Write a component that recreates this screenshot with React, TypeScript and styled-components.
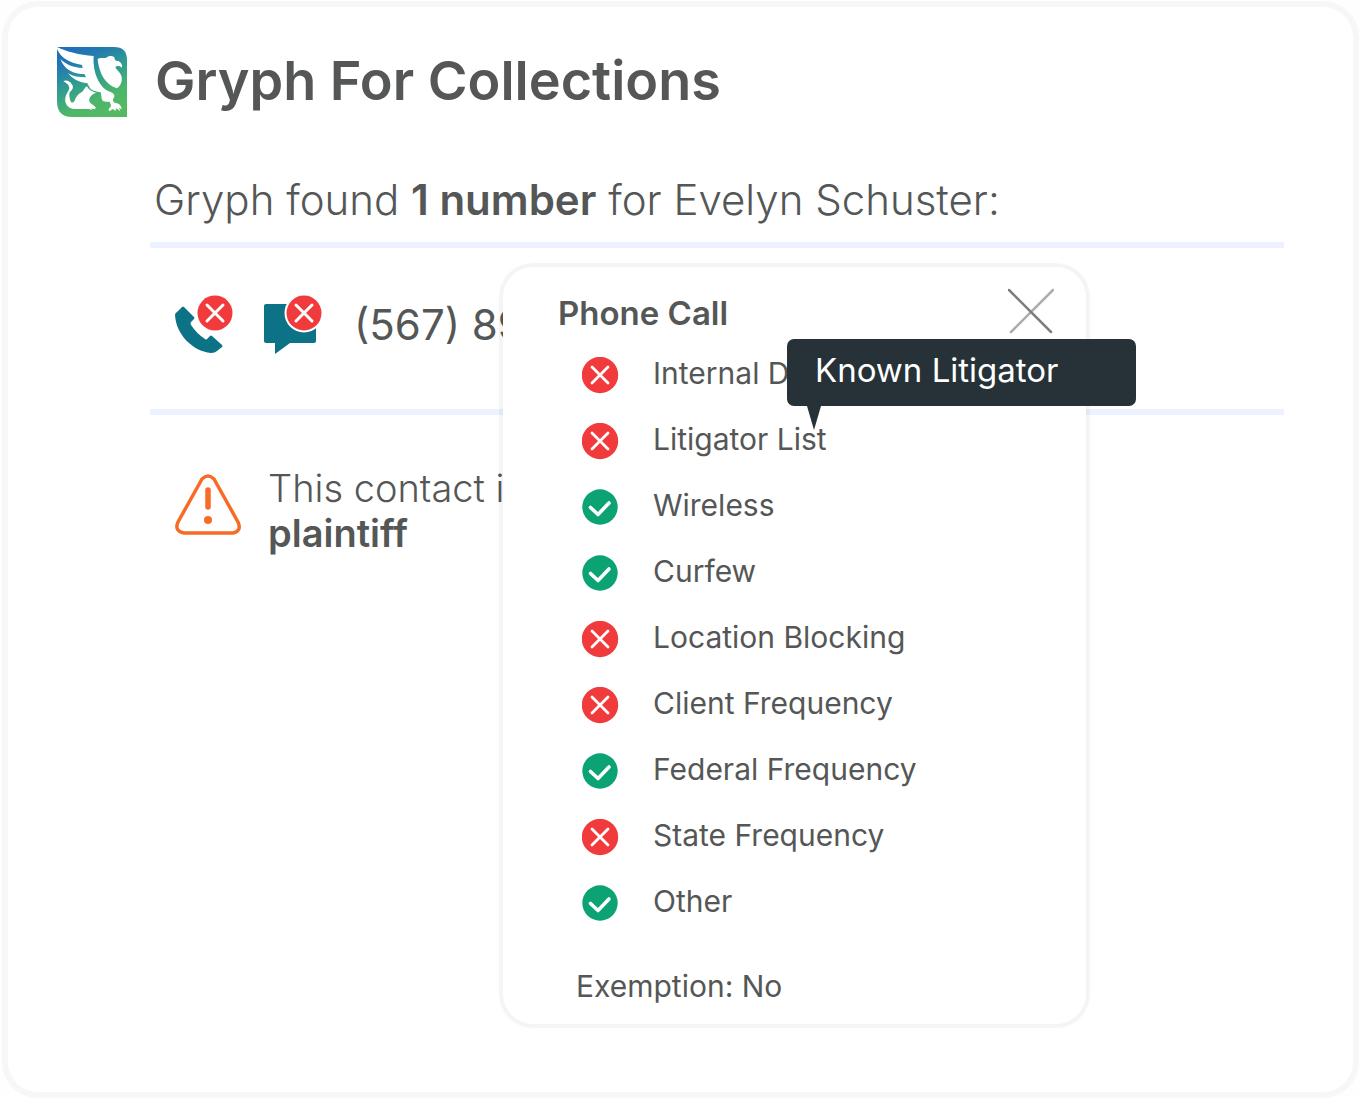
import React from "react";
import styled, { createGlobalStyle } from "styled-components";

const ink = "#555756";
const red = "#f03a3c";
const green = "#0ba373";
const teal = "#0c7285";
const rule = "#ecf2ff";

const GlobalStyle = createGlobalStyle`
  *, *::before, *::after { box-sizing: border-box; }
  body {
    margin: 0;
    background: #fefefe;
    color: ${ink};
    font-family: Inter, "Liberation Sans", sans-serif;
  }
  h1, h2, p, ul { margin: 0; padding: 0; }
  svg { display: block; flex: none; }
`;

const Page = styled.div`
  display: flex;
  min-height: 100vh;
  padding: 7px 8px 6px;
`;

const Card = styled.main`
  flex: 1;
  min-width: 0;
  padding: 40px 69px 60px 49px;
  background: #fff;
  border-radius: 30px;
  box-shadow: 0 0 0 6px #f7f7f7;
`;

const Header = styled.header`
  display: flex;
  align-items: center;
  gap: 28px;
  height: 70px;
`;

const Title = styled.h1`
  padding-bottom: 2px;
  font-size: 54px;
  line-height: 66px;
  font-weight: 600;
`;

const Body = styled.section`
  margin-left: 93px;
  padding-top: 57px;
`;

const Summary = styled.p`
  padding: 0 4px 17px;
  font-size: 42px;
  line-height: 51px;
  font-weight: 350;
  border-bottom: 6px solid ${rule};

  strong { font-weight: 600; }
`;

const NumberRow = styled.div`
  position: relative;
  display: flex;
  align-items: center;
  gap: 31px;
  height: 167px;
  padding: 0 25px 8px;
  border-bottom: 6px solid ${rule};
`;

const IconButton = styled.button`
  display: flex;
  padding: 0;
  border: 0;
  background: none;
  color: inherit;
  cursor: pointer;
`;

const PhoneNumber = styled.span`
  font-size: 42px;
  line-height: 51px;
  white-space: nowrap;
`;

const Notice = styled.div`
  display: flex;
  align-items: flex-start;
  gap: 26px;
  padding: 51px 25px 0;
  font-size: 38px;
  line-height: 45px;
  font-weight: 350;

  svg { margin-top: 8px; }
  strong { display: block; font-weight: 600; }
`;

const Popover = styled.div`
  position: absolute;
  z-index: 1;
  top: 19px;
  left: 353px;
  width: 583px;
  padding: 21px 32px 18px 55px;
  background: #fff;
  border-radius: 30px;
  box-shadow: 0 0 0 4px rgba(0, 0, 0, 0.03), 0 0 5px 4px rgba(0, 0, 0, 0.015);
`;

const PopoverHeader = styled.div`
  display: flex;
  align-items: flex-start;
  justify-content: space-between;
  height: 54px;
`;

const PopoverTitle = styled.h2`
  font-size: 33px;
  line-height: 51px;
  font-weight: 600;
`;

const Checks = styled.ul`
  list-style: none;
`;

const Check = styled.li`
  position: relative;
  display: flex;
  align-items: center;
  gap: 34px;
  height: 66px;
  padding-left: 24px;
  font-size: 30px;
  line-height: 36px;
`;

const CheckLabel = styled.span`
  padding-bottom: 5px;
`;

const Exemption = styled.p`
  padding: 32px 18px 2px;
  font-size: 30px;
  line-height: 36px;
`;

const Tooltip = styled.div`
  position: absolute;
  z-index: 2;
  left: 229px;
  bottom: 68px;
  width: 349px;
  padding: 6px 28px 10px;
  border-radius: 7px;
  background: #263238;
  color: #fff;
  font-size: 33px;
  line-height: 51px;

  &::after {
    content: "";
    position: absolute;
    top: 100%;
    left: 20px;
    border: solid transparent;
    border-width: 24px 7px 0;
    border-top-color: #263238;
  }
`;

function Logo() {
  return (
    <svg width="70" height="70" viewBox="51 51 210 210" aria-hidden="true">
      <defs>
        <linearGradient id="sky" x1="0.25" y1="0" x2="0.7" y2="1">
          <stop offset="0" stopColor="#1f6fb9" />
          <stop offset="0.15" stopColor="#2277b3" />
          <stop offset="0.42" stopColor="#2e9a94" />
          <stop offset="0.75" stopColor="#4cb669" />
          <stop offset="1" stopColor="#54ba62" />
        </linearGradient>
      </defs>
      <path d="M51 51H222Q261 51 261 90V261H96Q51 261 51 214Z" fill="url(#sky)" />
      <g fill="#fff">
        <path d="M51 51C82 66 116 74 161 78C159 108 165 139 181 162C190 176 202 184 216 188C224 192 226 199 219 207C218 215 222 219 231 220C239 222 244 228 245 238L237 233L241 244L229 235L226 243L219 237L207 244L206 237L213 229C214 222 207 215 205 207C202 198 194 190 182 187C169 183 161 184 151 176L142 160C119 158 98 148 84 130C99 139 117 142 138 142L133 132C101 132 72 119 61 86C75 102 97 112 128 114L126 105C91 99 63 85 51 57Z" />
        <path d="M182 187C185 197 183 208 190 214L205 216L216 207L216 188L190 178Z" />
        <path d="M173 87C182 81 190 86 199 83C205 78 216 76 223 82C225 87 223 91 229 92C240 92 248 101 246 113C239 106 230 107 226 112C231 122 243 128 245 142C247 158 240 169 231 175C209 168 190 150 182 126C177 113 174 101 173 87Z" />
        <path d="M70 154C78 148 90 154 96 163C102 173 97 180 92 184C85 190 89 202 91 212C93 219 100 219 104 212C107 201 114 191 127 185C132 180 134 172 141 169C146 179 154 184 168 188C157 192 149 199 148 208C146 217 153 221 161 226L168 234L163 238L153 235L157 241L148 237H104C84 235 73 222 76 203C77 193 87 184 88 175C87 164 79 159 70 154Z" />
      </g>
    </svg>
  );
}

function BadgedPhone() {
  return (
    <svg width="58" height="60" viewBox="0 0 58 60" aria-hidden="true">
      <path
        d="M7 12Q8 11 9 12L19 22Q20 23 19 24L16 27Q15 28 16 30Q22 39 30 44Q31 45 32 44L35 41Q36 40 37 41L47 50Q48 51 47 52L42 56Q40 58 36 58C17 56 1 39 0 20Q0 18 2 17Z"
        fill={teal}
      />
      <circle cx="40" cy="18" r="17.5" fill={red} />
      <path d="M32 10L48 26M48 10L32 26" stroke="#fff" strokeWidth="3" strokeLinecap="round" />
    </svg>
  );
}

function BadgedMessage() {
  return (
    <svg width="59" height="60" viewBox="0 0 59 60" aria-hidden="true">
      <path d="M2 9H50Q52 9 52 11V46Q52 48 50 48H26L11 59V48H2Q0 48 0 46V11Q0 9 2 9Z" fill={teal} />
      <circle cx="40" cy="18" r="18.5" fill={red} stroke="#fff" strokeWidth="2" />
      <path d="M32 10L48 26M48 10L32 26" stroke="#fff" strokeWidth="3" strokeLinecap="round" />
    </svg>
  );
}

function WarningIcon() {
  return (
    <svg width="67" height="62" viewBox="0 0 67 62" fill="none" stroke="#f76b26" strokeLinecap="round" aria-hidden="true">
      <path d="M27 5Q33 -1 39 5L63 48Q67 57 58 59H9Q-1 57 3 48Z" strokeWidth="3.5" strokeLinejoin="round" />
      <path d="M33 16V33" strokeWidth="5.5" />
      <circle cx="33" cy="46" r="4" fill="#f76b26" stroke="none" />
    </svg>
  );
}

function CloseIcon() {
  return (
    <svg width="46" height="46" viewBox="0 0 46 46" fill="none" strokeWidth="2.5" strokeLinecap="round" aria-hidden="true">
      <path d="M45 2L3 44" stroke="#acadad" />
      <path d="M1 2L43 44" stroke="#7d7f7e" />
    </svg>
  );
}

function StatusIcon({ ok }: { ok: boolean }) {
  return (
    <svg width="37" height="37" viewBox="0 0 37 37" fill="none" role="img" aria-label={ok ? "Passed" : "Blocked"}>
      <circle cx="18" cy="18" r={ok ? 17.7 : 18.2} fill={ok ? green : red} />
      <path
        d={ok ? "M8.5 18.5L16 25.5L27 14" : "M10 10L26 26M26 10L10 26"}
        stroke="#fff"
        strokeWidth={ok ? 3.6 : 2.8}
        strokeLinecap="round"
        strokeLinejoin="round"
      />
    </svg>
  );
}

const checks = [
  { label: "Internal D", ok: false },
  { label: "Litigator List", ok: false, tip: "Known Litigator" },
  { label: "Wireless", ok: true },
  { label: "Curfew", ok: true },
  { label: "Location Blocking", ok: false },
  { label: "Client Frequency", ok: false },
  { label: "Federal Frequency", ok: true },
  { label: "State Frequency", ok: false },
  { label: "Other", ok: true },
];

export default function App() {
  return (
    <>
      <GlobalStyle />
      <Page>
        <Card>
          <Header>
            <Logo />
            <Title>Gryph For Collections</Title>
          </Header>
          <Body>
            <Summary>
              Gryph found <strong>1 number</strong> for Evelyn Schuster:
            </Summary>
            <NumberRow>
              <IconButton type="button" aria-label="Phone call blocked">
                <BadgedPhone />
              </IconButton>
              <IconButton type="button" aria-label="Text message blocked">
                <BadgedMessage />
              </IconButton>
              <PhoneNumber>(567) 89</PhoneNumber>
              <Popover role="dialog" aria-labelledby="popover-title">
                <PopoverHeader>
                  <PopoverTitle id="popover-title">Phone Call</PopoverTitle>
                  <IconButton type="button" aria-label="Close">
                    <CloseIcon />
                  </IconButton>
                </PopoverHeader>
                <Checks>
                  {checks.map((check) => (
                    <Check key={check.label}>
                      <StatusIcon ok={check.ok} />
                      <CheckLabel>{check.label}</CheckLabel>
                      {check.tip && <Tooltip role="tooltip">{check.tip}</Tooltip>}
                    </Check>
                  ))}
                </Checks>
                <Exemption>Exemption: No</Exemption>
              </Popover>
            </NumberRow>
            <Notice>
              <WarningIcon />
              <p>
                This contact is <strong>plaintiff</strong>
              </p>
            </Notice>
          </Body>
        </Card>
      </Page>
    </>
  );
}
